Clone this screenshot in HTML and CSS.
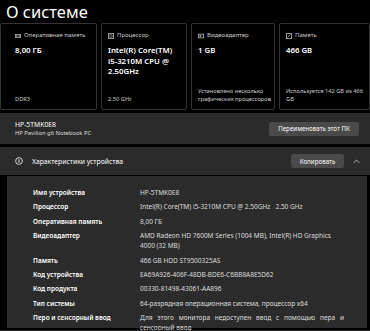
FILE: index.html
```html
<!DOCTYPE html>
<html lang="ru">
<head>
<meta charset="utf-8">
<title>О системе</title>
<link rel="stylesheet" href="styles.css">
</head>
<body>
<div class="page">
  <h1 class="title">О системе</h1>

  <div class="cards">
    <div class="card">
      <div class="card-label">
        <svg class="ico" viewBox="0 0 8 8"><rect x="0.5" y="2" width="7" height="4" fill="none" stroke="#bbb" stroke-width="1"/><path d="M2 2.5v3M4 2.5v3M6 2.5v3" stroke="#bbb" stroke-width="0.8"/></svg>
        <span>Оперативная память</span>
      </div>
      <div class="card-value">8,00 ГБ</div>
      <div class="card-foot">DDR3</div>
    </div>
    <div class="card">
      <div class="card-label">
        <svg class="ico" viewBox="0 0 8 8"><rect x="0.5" y="0.5" width="7" height="7" fill="none" stroke="#bbb" stroke-width="1"/><rect x="2.5" y="2.5" width="3" height="3" fill="none" stroke="#bbb" stroke-width="0.8"/></svg>
        <span>Процессор</span>
      </div>
      <div class="card-value">Intel(R) Core(TM) i5-&#8288;3210M CPU @ 2.50GHz</div>
      <div class="card-foot">2.50 GHz</div>
    </div>
    <div class="card">
      <div class="card-label">
        <svg class="ico" viewBox="0 0 8 8"><rect x="0.5" y="1.5" width="7" height="5" fill="none" stroke="#bbb" stroke-width="1"/><rect x="2" y="3" width="2.5" height="2" fill="#bbb"/></svg>
        <span>Видеоадаптер</span>
      </div>
      <div class="card-value">1 GB</div>
      <div class="card-foot">Установлено несколько графических процессоров</div>
    </div>
    <div class="card">
      <div class="card-label">
        <svg class="ico" viewBox="0 0 8 8"><rect x="0.5" y="0.5" width="7" height="7" fill="none" stroke="#bbb" stroke-width="1"/><path d="M2 6L6 2" stroke="#bbb" stroke-width="1"/></svg>
        <span>Память</span>
      </div>
      <div class="card-value">466 GB</div>
      <div class="card-foot">Используется 142 GB из 466 GB</div>
    </div>
  </div>

  <div class="panel device">
    <div class="device-text">
      <div class="device-name">HP-5TMK0E8</div>
      <div class="device-model">HP Pavilion g6 Notebook PC</div>
    </div>
    <button class="btn">Переименовать этот ПК</button>
  </div>

  <div class="panel spec-head">
    <svg class="info" viewBox="0 0 10 10"><circle cx="5" cy="5" r="4.2" fill="none" stroke="#fff" stroke-width="1"/><path d="M5 2.8v4.4" stroke="#fff" stroke-width="1.1"/></svg>
    <span class="spec-title">Характеристики устройства</span>
    <button class="btn">Копировать</button>
    <svg class="chev" viewBox="0 0 10 6"><path d="M1 5L5 1L9 5" fill="none" stroke="#ddd" stroke-width="1.1"/></svg>
  </div>

  <div class="spec-body">
    <dl class="spec-grid">
      <dt>Имя устройства</dt><dd>HP-5TMK0E8</dd>
      <dt>Процессор</dt><dd>Intel(R) Core(TM) i5-3210M CPU @ 2.50GHz&nbsp;&nbsp; 2.50 GHz</dd>
      <dt>Оперативная память</dt><dd>8,00 ГБ</dd>
      <dt>Видеоадаптер</dt><dd>AMD Radeon HD 7600M Series (1004 MB), Intel(R) HD Graphics 4000 (32 MB)</dd>
      <dt>Память</dt><dd>466 GB HDD ST9500325AS</dd>
      <dt>Код устройства</dt><dd>EA69A926-406F-48DB-BDE6-C6BB8A8E5D62</dd>
      <dt>Код продукта</dt><dd>00330-81498-43061-AA896</dd>
      <dt>Тип системы</dt><dd>64-разрядная операционная система, процессор x64</dd>
      <dt>Перо и сенсорный ввод</dt><dd class="justify">Для этого монитора недоступен ввод с помощью пера и сенсорный ввод</dd>
    </dl>
  </div>

  <div class="panel next"></div>
</div>
</body>
</html>
```

FILE: styles.css
```css
* { box-sizing: border-box; }
html, body { margin: 0; padding: 0; }
body {
  background: #000;
  color: #fff;
  font-family: "Noto Sans", "Open Sans", sans-serif;
  width: 370px;
  height: 331px;
  overflow: hidden;
}
.page { display: flex; flex-direction: column; }
.title {
  margin: 0;
  padding-left: 6px;
  font-size: 16.5px;
  font-weight: 400;
  line-height: 23px;
  height: 23px;
}
.cards {
  display: grid;
  grid-template-columns: 97px 86px 84px 1fr;
  gap: 4px;
  height: 87px;
}
.card {
  border: 1px solid #333;
  border-radius: 2px;
  background: #000;
  display: flex;
  flex-direction: column;
  padding: 7px 3px 6px 6px;
}
.card:first-child { padding-left: 14px; }
.card:last-child { padding-right: 5px; }
.card-label {
  display: flex;
  align-items: center;
  gap: 3px;
  font-size: 6px;
  line-height: 9px;
  color: #ccc;
}
.ico { width: 6px; height: 6px; flex: none; }
.card-value {
  margin-top: 5px;
  font-size: 7.8px;
  font-weight: 600;
  line-height: 10.5px;
}
.card-foot {
  margin-top: auto;
  font-size: 5.7px;
  line-height: 8px;
  color: #ccc;
}
.panel {
  background: #2b2b2b;
  display: flex;
  align-items: center;
}
.device {
  margin-top: 3px;
  height: 31px;
  padding: 0 11px 0 15px;
  justify-content: space-between;
}
.device-name { font-size: 6.8px; line-height: 8px; }
.device-model { font-size: 5.8px; line-height: 8px; color: #ddd; }
.btn {
  background: #4a4a4a;
  color: #fff;
  border: none;
  border-radius: 2px;
  font-family: inherit;
  font-size: 6.2px;
  height: 14px;
  padding: 0 6px;
}
.device .btn { width: 90px; }
.spec-head {
  margin-top: 3px;
  height: 28px;
  padding: 0 10px 0 15px;
}
.info { width: 8px; height: 8px; flex: none; }
.spec-title { font-size: 6.8px; margin-left: 9px; flex: 1; }
.spec-head .btn { width: 53px; }
.chev { width: 7px; height: 5px; margin-left: 9px; }
.spec-body {
  margin: 1px 3px 0 7px;
  background: #2b2b2b;
  height: 152px;
  padding: 12px 0 0 26px;
}
.spec-grid {
  margin: 0;
  display: grid;
  grid-template-columns: 107px 204px;
  row-gap: 4.4px;
  font-size: 6.5px;
  line-height: 10px;
}
.spec-grid dt { font-weight: 600; color: #fff; }
.spec-grid dd { margin: 0; color: #ddd; }
.spec-grid .justify { text-align: justify; }
.next { margin-top: 2px; height: 10px; }
```
